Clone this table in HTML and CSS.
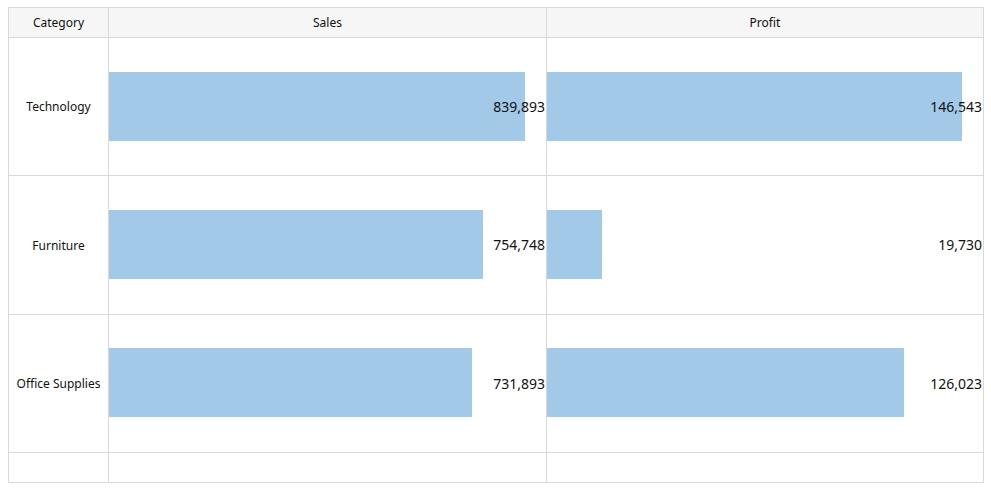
FILE: index.html
```html
<!DOCTYPE html>
<html>
<head>
<meta charset="utf-8">
<link rel="stylesheet" href="styles.css">
</head>
<body>
<div class="grid">
  <div class="cell head">Category</div>
  <div class="cell head">Sales</div>
  <div class="cell head">Profit</div>

  <div class="cell cat r1">Technology</div>
  <div class="cell val r1"><div class="bar" style="width:416px"></div><span class="num">839,893</span></div>
  <div class="cell val r1"><div class="bar" style="width:415px"></div><span class="num">146,543</span></div>

  <div class="cell cat r2">Furniture</div>
  <div class="cell val r2"><div class="bar" style="width:374px"></div><span class="num">754,748</span></div>
  <div class="cell val r2"><div class="bar" style="width:55px"></div><span class="num">19,730</span></div>

  <div class="cell cat r3">Office Supplies</div>
  <div class="cell val r3"><div class="bar" style="width:363px"></div><span class="num">731,893</span></div>
  <div class="cell val r3"><div class="bar" style="width:357px"></div><span class="num">126,023</span></div>

  <div class="cell foot"></div>
  <div class="cell foot"></div>
  <div class="cell foot"></div>
</div>
</body>
</html>
```

FILE: styles.css
```css
html, body {
  margin: 0;
  padding: 0;
  background: #ffffff;
}
body {
  padding: 7px 0 0 8px;
  font-family: "Noto Sans", "Open Sans", sans-serif;
  color: #111111;
}
.grid {
  width: 976px;
  box-sizing: border-box;
  display: grid;
  grid-template-columns: 100px 438px 437px;
  grid-template-rows: 30px 138px 139px 138px 30px;
  border-left: 1px solid #d9d9d9;
  border-top: 1px solid #d9d9d9;
}
.cell {
  box-sizing: border-box;
  border-right: 1px solid #d9d9d9;
  border-bottom: 1px solid #d9d9d9;
}
.head {
  background: #f6f6f6;
  font-size: 12px;
  display: flex;
  align-items: center;
  justify-content: center;
}
.cat {
  font-size: 12px;
  display: flex;
  align-items: center;
  justify-content: center;
}
.val {
  display: grid;
  grid-template-areas: "stack";
  align-items: center;
}
.bar {
  grid-area: stack;
  justify-self: start;
  align-self: start;
  margin-top: 34px;
  height: 69px;
  background: #a2c9e7;
}
.r3 .bar {
  margin-top: 33px;
}
.num {
  grid-area: stack;
  justify-self: end;
  font-size: 14px;
  padding-right: 1px;
  line-height: 20px;
}
```
